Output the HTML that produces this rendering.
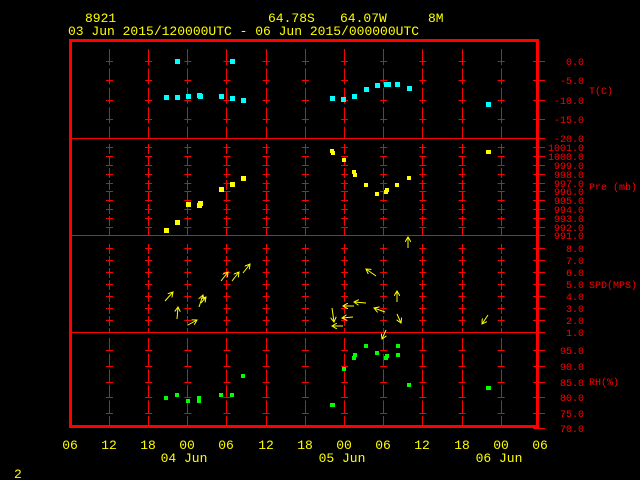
<!DOCTYPE html>
<html><head><meta charset="utf-8"><style>
html,body{margin:0;padding:0;background:#000;width:640px;height:480px;overflow:hidden}
svg{display:block}
text{font-family:"Liberation Mono","DejaVu Sans Mono",monospace}
.y{fill:#ffff00;font-size:13px}
.r{fill:#ff0000;font-size:10px;text-anchor:end}
.u{fill:#ff0000;font-size:10px}
.h{fill:#ffff00;font-size:13px;text-anchor:middle}
</style></head><body>
<svg width="640" height="480" viewBox="0 0 640 480" xmlns="http://www.w3.org/2000/svg">
<defs>
<marker id="ah" markerWidth="6" markerHeight="6" refX="5" refY="3" orient="auto" markerUnits="userSpaceOnUse">
<path d="M0,0 L5,3 L0,6" fill="none" stroke="#ffff00" stroke-width="1"/>
</marker>
</defs>
<!-- header -->
<text class="y" x="85" y="22">8921</text>
<text class="y" x="268" y="22">64.78S</text>
<text class="y" x="340" y="22">64.07W</text>
<text class="y" x="428" y="22">8M</text>
<text class="y" x="68" y="35">03 Jun 2015/120000UTC - 06 Jun 2015/000000UTC</text>

<!-- vertical grid -->
<g stroke="#ff0000" stroke-width="1">
<g stroke-dasharray="16 3.4">
<path d="M109.5 49V138M148.5 49V138M187.5 49V138M226.5 49V138M266.5 49V138M305.5 49V138M344.5 49V138M383.5 49V138M422.5 49V138M462.5 49V138M501.5 49V138"/>
</g>
<g stroke-dasharray="10 2">
<path d="M109.5 144V235M148.5 144V235M187.5 144V235M226.5 144V235M266.5 144V235M305.5 144V235M344.5 144V235M383.5 144V235M422.5 144V235M462.5 144V235M501.5 144V235"/>
<path d="M109.5 244V332M148.5 244V332M187.5 244V332M226.5 244V332M266.5 244V332M305.5 244V332M344.5 244V332M383.5 244V332M422.5 244V332M462.5 244V332M501.5 244V332"/>
</g>
<g stroke-dasharray="13 2.6">
<path d="M109.5 338V425M148.5 338V425M187.5 338V425M226.5 338V425M266.5 338V425M305.5 338V425M344.5 338V425M383.5 338V425M422.5 338V425M462.5 338V425M501.5 338V425"/>
</g>
<!-- horizontal tick marks via dash pattern -->
<g stroke-dasharray="7 32.17">
<path d="M106 61.5H505M106 80.5H505M106 100.5H505M106 119.5H505"/>
<path d="M106 147.5H505M106 156.5H505M106 165.5H505M106 174.5H505M106 183.5H505M106 191.5H505M106 200.5H505M106 209.5H505M106 218.5H505M106 227.5H505"/>
<path d="M106 248.5H505M106 260.5H505M106 272.5H505M106 284.5H505M106 296.5H505M106 308.5H505M106 320.5H505"/>
<path d="M106 350.5H505M106 366.5H505M106 382.5H505M106 397.5H505M106 413.5H505"/>
</g>
<!-- panel dividers -->
<path d="M72 138.5H538M72 235.5H538M72 332.5H538"/>
<!-- right axis ticks -->
<path d="M533 61.5H545M533 80.5H545M533 100.5H545M533 119.5H545M533 138.5H545
M533 147.5H545M533 156.5H545M533 165.5H545M533 174.5H545M533 183.5H545M533 191.5H545M533 200.5H545M533 209.5H545M533 218.5H545M533 227.5H545M533 235.5H545
M533 248.5H545M533 260.5H545M533 272.5H545M533 284.5H545M533 296.5H545M533 308.5H545M533 320.5H545M533 332.5H545
M533 350.5H545M533 366.5H545M533 382.5H545M533 397.5H545M533 413.5H545M533 428.5H545"/>
</g>
<!-- frame -->
<rect x="70.5" y="40.5" width="467" height="386" fill="none" stroke="#ff0000" stroke-width="3"/>

<!-- right labels -->
<text class="r" x="584" y="65">0.0</text>
<text class="r" x="584" y="84">-5.0</text>
<text class="r" x="584" y="104">-10.0</text>
<text class="r" x="584" y="123">-15.0</text>
<text class="r" x="584" y="142">-20.0</text>
<text class="r" x="584" y="151">1001.0</text>
<text class="r" x="584" y="160">1000.0</text>
<text class="r" x="584" y="169">999.0</text>
<text class="r" x="584" y="178">998.0</text>
<text class="r" x="584" y="187">997.0</text>
<text class="r" x="584" y="195">996.0</text>
<text class="r" x="584" y="204">995.0</text>
<text class="r" x="584" y="213">994.0</text>
<text class="r" x="584" y="222">993.0</text>
<text class="r" x="584" y="231">992.0</text>
<text class="r" x="584" y="239">991.0</text>
<text class="r" x="584" y="252">8.0</text>
<text class="r" x="584" y="264">7.0</text>
<text class="r" x="584" y="276">6.0</text>
<text class="r" x="584" y="288">5.0</text>
<text class="r" x="584" y="300">4.0</text>
<text class="r" x="584" y="312">3.0</text>
<text class="r" x="584" y="324">2.0</text>
<text class="r" x="584" y="336">1.0</text>
<text class="r" x="584" y="354">95.0</text>
<text class="r" x="584" y="370">90.0</text>
<text class="r" x="584" y="386">85.0</text>
<text class="r" x="584" y="401">80.0</text>
<text class="r" x="584" y="417">75.0</text>
<text class="r" x="584" y="432">70.0</text>
<text class="u" x="589" y="94">T(C)</text>
<text class="u" x="589" y="190">Pre (mb)</text>
<text class="u" x="589" y="288">SPD(MPS)</text>
<text class="u" x="589" y="385">RH(%)</text>

<!-- bottom labels -->
<text class="h" x="70" y="449">06</text>
<text class="h" x="109" y="449">12</text>
<text class="h" x="148" y="449">18</text>
<text class="h" x="187" y="449">00</text>
<text class="h" x="226" y="449">06</text>
<text class="h" x="266" y="449">12</text>
<text class="h" x="305" y="449">18</text>
<text class="h" x="344" y="449">00</text>
<text class="h" x="383" y="449">06</text>
<text class="h" x="422" y="449">12</text>
<text class="h" x="462" y="449">18</text>
<text class="h" x="501" y="449">00</text>
<text class="h" x="540" y="449">06</text>
<text class="h" x="184" y="462">04 Jun</text>
<text class="h" x="342" y="462">05 Jun</text>
<text class="h" x="499" y="462">06 Jun</text>
<text class="y" x="14" y="478">2</text>

<!-- T (cyan) -->
<g fill="#00ffff">
<rect x="175" y="59" width="5" height="5"/><rect x="230" y="59" width="5" height="5"/>
<rect x="164" y="95" width="5" height="5"/><rect x="175" y="95" width="5" height="5"/>
<rect x="186" y="94" width="5" height="5"/><rect x="197" y="93" width="5" height="5"/>
<rect x="198" y="94" width="5" height="5"/><rect x="219" y="94" width="5" height="5"/>
<rect x="230" y="96" width="5" height="5"/><rect x="241" y="98" width="5" height="5"/>
<rect x="330" y="96" width="5" height="5"/><rect x="341" y="97" width="5" height="5"/>
<rect x="352" y="94" width="5" height="5"/><rect x="364" y="87" width="5" height="5"/>
<rect x="375" y="83" width="5" height="5"/><rect x="384" y="82" width="5" height="5"/>
<rect x="386" y="82" width="5" height="5"/><rect x="395" y="82" width="5" height="5"/>
<rect x="407" y="86" width="5" height="5"/><rect x="486" y="102" width="5" height="5"/>
</g>
<!-- Pre (yellow) -->
<g fill="#ffff00">
<rect x="164" y="228" width="5" height="5"/><rect x="175" y="220" width="5" height="5"/>
<rect x="186" y="202" width="5" height="5"/><rect x="197" y="203" width="5" height="5"/>
<rect x="198" y="201" width="5" height="5"/><rect x="219" y="187" width="5" height="5"/>
<rect x="230" y="182" width="5" height="5"/><rect x="241" y="176" width="5" height="5"/>
<rect x="330" y="149" width="4" height="4"/><rect x="331" y="151" width="4" height="4"/>
<rect x="342" y="158" width="4" height="4"/><rect x="352" y="170" width="4" height="4"/>
<rect x="353" y="173" width="4" height="4"/><rect x="364" y="183" width="4" height="4"/>
<rect x="375" y="192" width="4" height="4"/><rect x="384" y="190" width="4" height="4"/>
<rect x="385" y="188" width="4" height="4"/><rect x="395" y="183" width="4" height="4"/>
<rect x="407" y="176" width="4" height="4"/><rect x="486" y="150" width="5" height="4"/>
</g>
<!-- RH (green) -->
<g fill="#00ff00">
<rect x="164" y="396" width="4" height="4"/><rect x="175" y="393" width="4" height="4"/>
<rect x="186" y="399" width="4" height="4"/><rect x="197" y="396" width="4" height="4"/>
<rect x="197" y="399" width="4" height="4"/><rect x="219" y="393" width="4" height="4"/>
<rect x="230" y="393" width="4" height="4"/><rect x="241" y="374" width="4" height="4"/>
<rect x="330" y="403" width="5" height="4"/><rect x="342" y="367" width="4" height="4"/>
<rect x="352" y="356" width="4" height="4"/><rect x="353" y="353" width="4" height="4"/>
<rect x="364" y="344" width="4" height="4"/><rect x="375" y="351" width="4" height="4"/>
<rect x="384" y="356" width="4" height="4"/><rect x="385" y="354" width="4" height="4"/>
<rect x="396" y="344" width="4" height="4"/><rect x="396" y="353" width="4" height="4"/>
<rect x="407" y="383" width="4" height="4"/><rect x="486" y="386" width="5" height="4"/>
</g>
<!-- SPD arrows -->
<g stroke="#ffff00" stroke-width="1" fill="none" marker-end="url(#ah)">
<line x1="165" y1="301" x2="173" y2="292"/>
<line x1="177" y1="319" x2="178" y2="307"/>
<line x1="188" y1="325" x2="197" y2="320"/>
<line x1="199" y1="307" x2="203" y2="295"/>
<line x1="201" y1="303" x2="206" y2="297"/>
<line x1="221" y1="281" x2="228" y2="272"/>
<line x1="232" y1="281" x2="239" y2="272"/>
<line x1="243" y1="273" x2="250" y2="264"/>
<line x1="408" y1="248" x2="408" y2="237"/>
<line x1="376" y1="276" x2="366" y2="269"/>
<line x1="397" y1="302" x2="397" y2="291"/>
<line x1="366" y1="303" x2="354" y2="302"/>
<line x1="354" y1="306" x2="343" y2="306"/>
<line x1="353" y1="317" x2="342" y2="318"/>
<line x1="343" y1="326" x2="332" y2="326"/>
<line x1="332" y1="308" x2="334" y2="322"/>
<line x1="385" y1="312" x2="374" y2="308"/>
<line x1="397" y1="314" x2="401" y2="323"/>
<line x1="386" y1="330" x2="382" y2="339"/>
<line x1="488" y1="315" x2="482" y2="324"/>
</g>
</svg>
</body></html>
